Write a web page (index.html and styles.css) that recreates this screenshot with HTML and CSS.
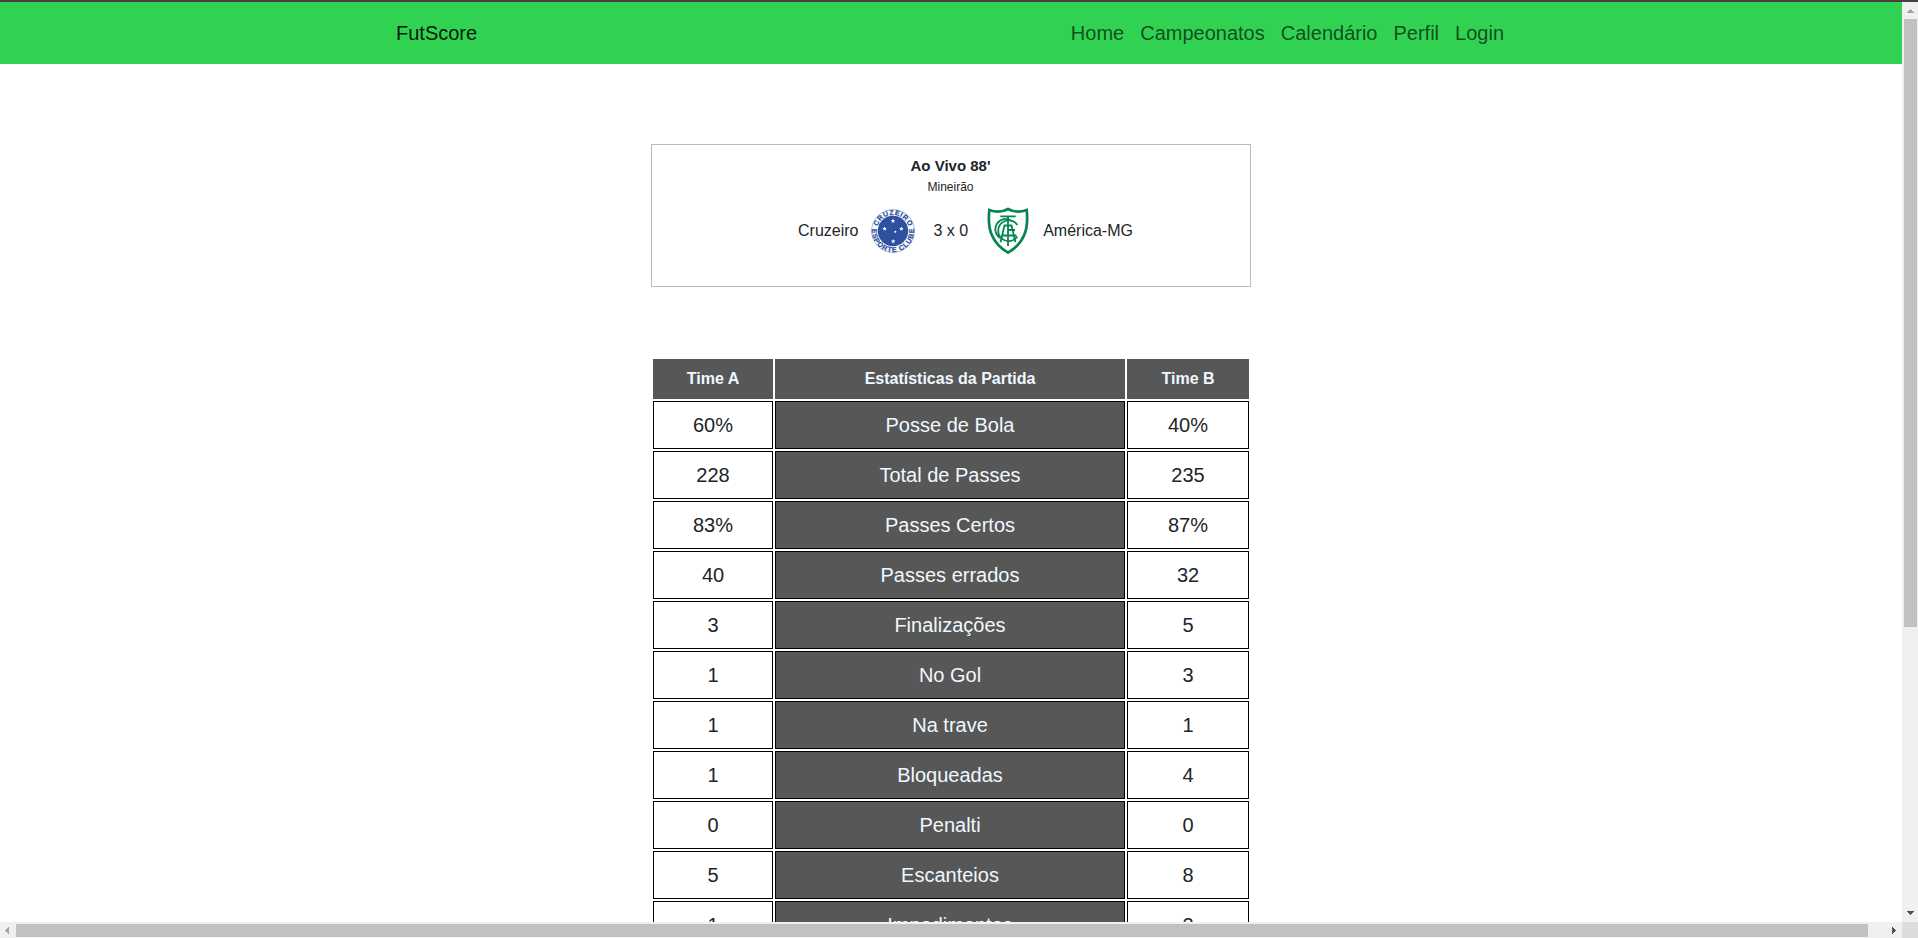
FILE: index.html
```
<!DOCTYPE html>
<html lang="pt-BR">
<head>
<meta charset="utf-8">
<title>FutScore</title>
<link rel="stylesheet" href="styles.css">
</head>
<body>
<div class="window">
  <main class="page">
    <nav class="navbar">
      <a class="brand">FutScore</a>
      <div class="links"><a>Home</a><a>Campeonatos</a><a>Calendário</a><a>Perfil</a><a>Login</a></div>
    </nav>
    <section class="match">
      <div class="status">Ao Vivo 88'</div>
      <div class="stadium">Mineirão</div>
      <div class="teams">
        <span class="home">Cruzeiro</span>
        <svg class="crest-home" viewBox="0 0 44 44">
          <defs>
            <path id="arc-top" d="M5.9 22A16.1 16.1 0 0 1 38.1 22"/>
            <path id="arc-bottom" d="M1.300 18.500A21 21 0 1 0 42.700 18.500"/>
            <path id="star" d="M0-2.4.6-.75 2.3-.75.95.3 1.45 2 0 1-1.45 2-.95.3-2.3-.75-.6-.75Z"/>
          </defs>
          <circle cx="22" cy="22" r="21.4" fill="#fff" stroke="#8fa3cf" stroke-width=".8"/>
          <circle cx="22" cy="22" r="15.2" fill="#2c519f"/>
          <text class="crest-text"><textPath href="#arc-top" startOffset="50%" text-anchor="middle" textLength="41">CRUZEIRO</textPath></text>
          <text class="crest-text"><textPath href="#arc-bottom" startOffset="50%" text-anchor="middle" textLength="70">ESPORTE CLUBE</textPath></text>
          <g fill="#fff">
            <use href="#star" x="22" y="12"/><use href="#star" x="13.6" y="19.8"/><use href="#star" x="30.4" y="19.8"/><use href="#star" x="22.2" y="32.3"/>
            <use href="#star" transform="translate(24.3 22.8) scale(.65)"/>
          </g>
        </svg>
        <span class="score">3 x 0</span>
        <svg class="crest-away" viewBox="0 0 42 48" fill="none" stroke="#078550">
          <path stroke-width="2.7" d="M2.3 3.1Q12.5 6.8 21 2Q29.5 6.8 39.7 3.1C41.7 22 37.5 36 21 45.7C4.5 36 .3 22 2.3 3.1Z"/>
          <g stroke-width="1.8">
            <path d="M13.300 9.300H28.700M21 9.300V39M13.500 35.200L17.500 18.500H24.500L28.500 35.200M15.500 28.500H29.500M21 23H28"/>
            <path d="M30.300 18A10.400 10.400 0 1 0 30.300 29.500M24.500 13.700A10 10 0 0 0 13 31"/>
          </g>
        </svg>
        <span class="away">América-MG</span>
      </div>
    </section>
    <table class="stats">
      <thead><tr><th class="col-a">Time A</th><th>Estatísticas da Partida</th><th class="col-b">Time B</th></tr></thead>
      <tbody>
        <tr><td>60%</td><td class="label">Posse de Bola</td><td>40%</td></tr>
        <tr><td>228</td><td class="label">Total de Passes</td><td>235</td></tr>
        <tr><td>83%</td><td class="label">Passes Certos</td><td>87%</td></tr>
        <tr><td>40</td><td class="label">Passes errados</td><td>32</td></tr>
        <tr><td>3</td><td class="label">Finalizações</td><td>5</td></tr>
        <tr><td>1</td><td class="label">No Gol</td><td>3</td></tr>
        <tr><td>1</td><td class="label">Na trave</td><td>1</td></tr>
        <tr><td>1</td><td class="label">Bloqueadas</td><td>4</td></tr>
        <tr><td>0</td><td class="label">Penalti</td><td>0</td></tr>
        <tr><td>5</td><td class="label">Escanteios</td><td>8</td></tr>
        <tr><td>1</td><td class="label">Impedimentos</td><td>2</td></tr>
      </tbody>
    </table>
  </main>
  <div class="bar-v">
    <svg class="arrow" viewBox="0 0 16 16" shape-rendering="crispEdges"><path fill="#a3a3a3" d="M8 7h1v1h1v1h1v1h1v1H5v-1h1V9h1V8h1z"/></svg>
    <div class="thumb-v"></div>
    <svg class="arrow last" viewBox="0 0 16 16" shape-rendering="crispEdges"><path fill="#505050" d="M5 5h7v1h-1v1h-1v1H9v1H8V8H7V7H6V6H5z"/></svg>
  </div>
  <div class="bar-h">
    <svg class="arrow" viewBox="0 0 16 16" shape-rendering="crispEdges"><path fill="#a3a3a3" d="M9 5v7H8v-1H7v-1H6V9H5V8h1V7h1V6h1V5z"/></svg>
    <div class="thumb-h"></div>
    <svg class="arrow last" viewBox="0 0 16 16" shape-rendering="crispEdges"><path fill="#505050" d="M6 5h1v1h1v1h1v1h1v1H9v1H8v1H7v1H6z"/></svg>
  </div>
  <div class="corner"></div>
</div>
</body>
</html>
```
FILE: styles.css
```
* { box-sizing: border-box; }
body {
  margin: 0;
  overflow: hidden;
  font-family: "Liberation Sans", Arial, sans-serif;
  font-size: 16px;
  line-height: 24px;
  color: #212529;
  background: #fff;
}
.window {
  display: grid;
  grid-template: 920px 16px / 1902px 16px;
  width: 1918px;
  height: 938px;
  border-top: 2px solid #474042;
}
.page { overflow: hidden; }
.navbar {
  display: flex;
  justify-content: space-between;
  align-items: center;
  height: 62px;
  padding: 0 398px 0 396px;
  background: #31d152;
  font-size: 20px;
  line-height: 30px;
}
.brand { color: rgba(0, 0, 0, .9); }
.links { display: flex; gap: 16px; color: rgba(0, 0, 0, .65); }
.match {
  width: 600px;
  height: 143px;
  margin: 80px auto 0;
  padding-top: 10px;
  border: 1px solid #bbb;
  text-align: center;
}
.status { padding-right: 1px; font-size: 15px; font-weight: 700; line-height: 22px; }
.stadium { padding-right: 1px; font-size: 12px; line-height: 20px; }
.teams {
  display: flex;
  align-items: center;
  height: 48px;
  margin-top: 10px;
  padding-left: 146px;
}
.crest-home { width: 44px; height: 44px; margin-left: 13px; }
.crest-text {
  fill: #2c519f;
  stroke: #2c519f;
  stroke-width: .25px;
  font-size: 7px;
  font-weight: 700;
}
.score { margin-left: 18px; }
.crest-away { width: 42px; height: 48px; margin-left: 19px; }
.away { margin-left: 14px; }
.stats {
  width: 600px;
  margin: 70px auto 0;
  table-layout: fixed;
  border-collapse: separate;
  border-spacing: 2px;
  text-align: center;
}
.stats th {
  height: 40px;
  padding: 0;
  color: aliceblue;
  background: #575757;
}
.stats .col-a { width: 120px; }
.stats .col-b { width: 122px; }
.stats td {
  height: 48px;
  padding: 0;
  border: 1px solid #000;
  font-size: 20px;
  line-height: 30px;
}
.stats .label { color: aliceblue; background: #575757; }
.bar-v, .bar-h { display: flex; background: #f0f0f0; }
.bar-v { flex-direction: column; }
.arrow { display: block; flex: none; width: 16px; height: 16px; }
.last { margin-top: auto; }
.bar-h .last { margin: 0 0 0 auto; }
.thumb-v { height: 608px; margin: 1px 1px 0 2px; background: #c1c1c1; }
.thumb-h { width: 1852px; margin: 2px 0 1px; background: #c1c1c1; }
.corner { background: #dcdcdc; }
```
